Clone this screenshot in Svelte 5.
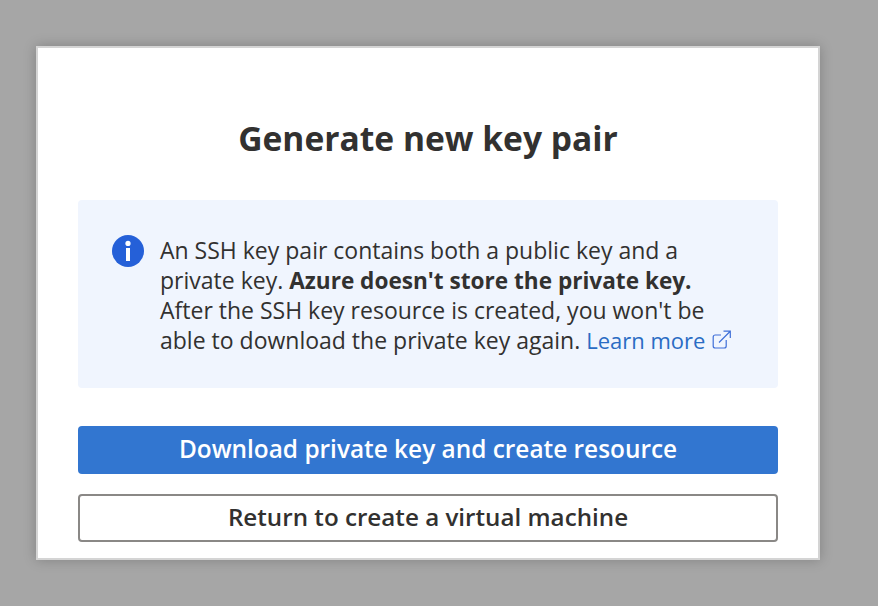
<script>
  const title = 'Generate new key pair';
</script>

<main class="page">
  <section class="dialog">
    <h1>{title}</h1>
    <div class="info">
      <svg class="info-icon" width="32" height="32" viewBox="0 0 32 32" aria-hidden="true">
        <circle cx="16" cy="16" r="16" fill="#2560d8" />
        <circle cx="16" cy="8.4" r="2.6" fill="#fff" />
        <rect x="14" y="13" width="4" height="13" fill="#fff" />
      </svg>
      <p>
        An SSH key pair contains both a public key and a private key.
        <strong>Azure doesn't store the private key.</strong>
        After the SSH key resource is created, you won't be able to download the private key again.
        <a href="#learn">Learn more<svg class="ext" width="19" height="20" viewBox="0 0 19 20" aria-hidden="true">
          <path d="M9 5H3.2C2 5 1.2 5.8 1.2 7v9c0 1.200.8 2 2 2h9c1.200 0 2-.8 2-2v-6" fill="none" stroke="#3f6fd8" stroke-width="1.200" />
          <path d="M7 12.500 18 1.500M11.500 1.200H18.300V8" fill="none" stroke="#3f6fd8" stroke-width="1.200" />
        </svg></a>
      </p>
    </div>
    <button class="primary">Download private key and create resource</button>
    <button class="secondary">Return to create a virtual machine</button>
  </section>
</main>

<style>
  :global(body) {
    margin: 0;
    background: #a6a6a6;
  }
  .page {
    height: 606px;
    padding: 46px 0 0 36px;
    box-sizing: border-box;
    overflow: hidden;
    font-family: "Open Sans", "Noto Sans", sans-serif;
    color: #323130;
  }
  .dialog {
    width: 784px;
    height: 514px;
    box-sizing: border-box;
    border: 2px solid #d4d4d4;
    background: #fff;
    padding: 0 40px;
    box-shadow: 0 0 12px rgba(0, 0, 0, 0.22);
    display: flex;
    flex-direction: column;
  }
  h1 {
    margin: 66px 0 38px;
    height: 48px;
    font-size: 33.6px;
    line-height: 48px;
    font-weight: 700;
    text-align: center;
    color: #323130;
  }
  .info {
    height: 188px;
    box-sizing: border-box;
    background: #f0f5fe;
    border-radius: 4px;
    padding: 35px 40px 0 34px;
    display: flex;
    gap: 16px;
    align-items: flex-start;
  }
  .info-icon {
    flex: none;
  }
  p {
    margin: 0;
    font-size: 23px;
    line-height: 30px;
  }
  strong {
    font-size: 22.6px;
    line-height: 1;
    font-weight: 700;
  }
  a {
    font-size: 22px;
    line-height: 1;
    color: #2a6cc4;
    text-decoration: none;
  }
  .ext {
    margin-left: 7px;
    vertical-align: -1px;
  }
  button {
    width: 100%;
    font-family: inherit;
    font-weight: 600;
    font-size: 24.2px;
    border-radius: 4px;
    box-sizing: border-box;
    padding: 0 0 4px;
    flex: none;
  }
  .primary {
    margin-top: 38px;
    height: 48px;
    font-size: 24.4px;
    background: #3276d0;
    color: #fff;
    border: none;
  }
  .secondary {
    margin-top: 20px;
    height: 48px;
    background: #fff;
    color: #323130;
    border: 2px solid #8a8886;
  }
</style>
